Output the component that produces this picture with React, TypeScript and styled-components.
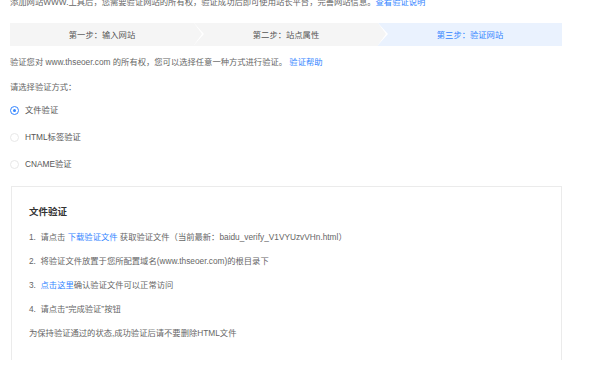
import React from "react";
import styled, { createGlobalStyle } from "styled-components";

const Global = createGlobalStyle`
  html, body { margin: 0; padding: 0; background: #fff; overflow: hidden; }
  body { font-family: "Liberation Sans", "Noto Sans CJK SC", sans-serif; color: #666; }
`;

const Page = styled.div`
  width: 552px;
  margin-left: 10px;
  display: flex;
  flex-direction: column;
  font-size: 8.3px;
  line-height: 12px;
`;

const TopNote = styled.div`
  margin-top: -4px;
  white-space: nowrap;
  color: #666;
`;

const Link = styled.a`
  color: #3385ff;
  text-decoration: none;
`;

const StepBar = styled.div`
  margin-top: 15px;
  height: 23px;
  display: flex;
  background: #f5f5f5;
`;

const Step = styled.div<{ $active?: boolean; $arrow?: boolean }>`
  position: relative;
  flex: 1;
  display: flex;
  align-items: center;
  justify-content: center;
  background: ${(p) => (p.$active ? "#eaf2fe" : "#f5f5f5")};
  color: ${(p) => (p.$active ? "#3385ff" : "#555")};
  ${(p) =>
    p.$arrow
      ? `
    &::before {
      content: "";
      position: absolute;
      right: -10px;
      top: 0;
      border-top: 11.5px solid transparent;
      border-bottom: 11.5px solid transparent;
      border-left: 10px solid #fff;
      z-index: 1;
    }
    &::after {
      content: "";
      position: absolute;
      right: -8px;
      top: 0;
      border-top: 11.5px solid transparent;
      border-bottom: 11.5px solid transparent;
      border-left: 8px solid #f5f5f5;
      z-index: 2;
    }
  `
      : ""}
`;

const Intro = styled.div`
  margin-top: 10px;
  white-space: nowrap;
`;

const Prompt = styled.div`
  margin-top: 13px;
`;

const RadioList = styled.div`
  margin-top: 11px;
  display: flex;
  flex-direction: column;
  gap: 15px;
`;

const RadioRow = styled.label`
  display: flex;
  align-items: center;
  gap: 6px;
  color: #555;
`;

const RadioDot = styled.span<{ $checked?: boolean }>`
  width: 7px;
  height: 7px;
  border-radius: 50%;
  border: 1px solid ${(p) => (p.$checked ? "#3385ff" : "#e8e8e8")};
  display: flex;
  align-items: center;
  justify-content: center;
  &::after {
    content: "";
    width: 3px;
    height: 3px;
    border-radius: 50%;
    background: ${(p) => (p.$checked ? "#3385ff" : "transparent")};
  }
`;

const Box = styled.div`
  margin-top: 16px;
  margin-left: 1px;
  border: 1px solid #ebebeb;
  border-bottom: none;
  padding: 18px 17px 21px 17px;
  display: flex;
  flex-direction: column;
  gap: 12px;
`;

const Heading = styled.div`
  font-size: 9.5px;
  line-height: 14px;
  font-weight: bold;
  color: #333;
`;

const Item = styled.div`
  white-space: nowrap;
  color: #666;
`;

export default function App() {
  return (
    <>
      <Global />
      <Page>
        <TopNote>
          添加网站WWW.工具后，您需要验证网站的所有权，验证成功后即可使用站长平台，完善网站信息。
          <Link href="#">查看验证说明</Link>
        </TopNote>
        <StepBar>
          <Step $arrow>第一步：输入网站</Step>
          <Step $arrow>第二步：站点属性</Step>
          <Step $active>第三步：验证网站</Step>
        </StepBar>
        <Intro>
          验证您对 www.thseoer.com 的所有权，您可以选择任意一种方式进行验证。 <Link href="#">验证帮助</Link>
        </Intro>
        <Prompt>请选择验证方式：</Prompt>
        <RadioList>
          <RadioRow>
            <RadioDot $checked />
            文件验证
          </RadioRow>
          <RadioRow>
            <RadioDot />
            HTML标签验证
          </RadioRow>
          <RadioRow>
            <RadioDot />
            CNAME验证
          </RadioRow>
        </RadioList>
        <Box>
          <Heading>文件验证</Heading>
          <Item>
            1.&nbsp; 请点击 <Link href="#">下载验证文件</Link> 获取验证文件（当前最新：baidu_verify_V1VYUzvVHn.html）
          </Item>
          <Item>2.&nbsp; 将验证文件放置于您所配置域名(www.thseoer.com)的根目录下</Item>
          <Item>
            3.&nbsp; <Link href="#">点击这里</Link>确认验证文件可以正常访问
          </Item>
          <Item>4.&nbsp; 请点击“完成验证”按钮</Item>
          <Item>为保持验证通过的状态,成功验证后请不要删除HTML文件</Item>
        </Box>
      </Page>
    </>
  );
}
